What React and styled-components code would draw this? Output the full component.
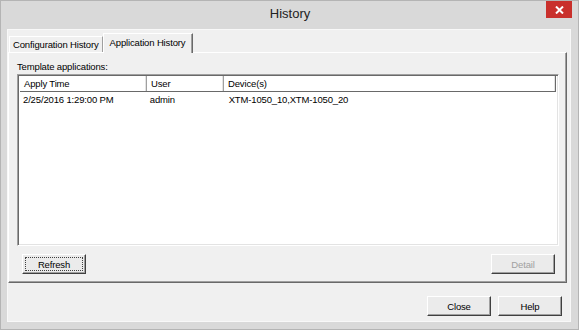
import React from "react";
import styled, {createGlobalStyle} from "styled-components";

const GlobalStyle = createGlobalStyle`
  html, body {
    margin: 0;
    padding: 0;
    background: #d9d9d9;
  }
  body {
    font-family: "Liberation Sans", Arial, sans-serif;
  }
`;

const COLUMNS = [
    {key: "time", label: "Apply Time", width: 127},
    {key: "user", label: "User", width: 77},
    {key: "devices", label: "Device(s)", width: 334},
];

const ROWS = [
    {time: "2/25/2016 1:29:00 PM", user: "admin", devices: "XTM-1050_10,XTM-1050_20"},
];

const App = () => {
    return (
        <>
            <GlobalStyle/>
            <Window>
                <TitleBar>
                    <span/>
                    <Title>History</Title>
                    <CloseBox>
                        <svg width="9" height="8" viewBox="0 0 9 8">
                            <path d="M1 0.5 L8 7.5 M8 0.5 L1 7.5" stroke="#fff" strokeWidth="2"/>
                        </svg>
                    </CloseBox>
                </TitleBar>
                <Client>
                    <TabStrip>
                        <Tab>Configuration History</Tab>
                        <Tab active>Application History</Tab>
                    </TabStrip>
                    <Panel>
                        <Label>Template applications:</Label>
                        <ListBox>
                            <HeaderRow>
                                {COLUMNS.map((col) => (
                                    <HeaderCell key={col.key} style={{width: col.width}}>{col.label}</HeaderCell>
                                ))}
                            </HeaderRow>
                            {ROWS.map((row, index) => (
                                <Row key={'row-' + index}>
                                    {COLUMNS.map((col) => (
                                        <Cell key={col.key} style={{width: col.width}}>{row[col.key]}</Cell>
                                    ))}
                                </Row>
                            ))}
                        </ListBox>
                        <PanelButtons>
                            <Button focused>Refresh</Button>
                            <Button disabled>Detail</Button>
                        </PanelButtons>
                    </Panel>
                    <Footer>
                        <Button>Close</Button>
                        <Button>Help</Button>
                    </Footer>
                </Client>
            </Window>
        </>
    );
};

const Window = styled.div`
  width: 579px;
  height: 330px;
  box-sizing: border-box;
  background: #d9d9d9;
  border: 1px solid #b4b4b4;
  padding: 0 7px 7px 6px;
  display: flex;
  flex-direction: column;
  font-size: 9.5px;
  letter-spacing: -0.15px;
  color: #000;
`;

const TitleBar = styled.div`
  height: 28px;
  display: grid;
  grid-template-columns: 1fr auto 1fr;
  align-items: start;
`;

const Title = styled.div`
  font-size: 13px;
  letter-spacing: 0;
  color: #222;
  line-height: 26px;
  padding-left: 2px;
`;

const CloseBox = styled.div`
  justify-self: end;
  margin-right: -1px;
  width: 26px;
  height: 17px;
  background: #c9302c;
  display: flex;
  align-items: center;
  justify-content: center;
`;

const Client = styled.div`
  flex: 1;
  background: #f0f0f0;
  border: 1px solid #f8f8f8;
  display: flex;
  flex-direction: column;
  padding: 3px 3px 0 0;
`;

const TabStrip = styled.div`
  display: flex;
  align-items: flex-end;
  padding-left: 1px;
  height: 19px;
  position: relative;
  z-index: 1;
`;

const Tab = styled.div`
  box-sizing: border-box;
  height: ${(p) => (p.active ? "20px" : "16px")};
  margin-bottom: ${(p) => (p.active ? "-1px" : "0")};
  padding: ${(p) => (p.active ? "2px 7px 0 6px" : "1px 3px 0 3px")};
  background: #f0f0f0;
  border-top: 1px solid #fff;
  border-left: 1px solid #fff;
  border-right: 1px solid ${(p) => (p.active ? "#696969" : "#a0a0a0")};
  box-shadow: ${(p) => (p.active ? "inset -1px 0 #a0a0a0" : "none")};
  line-height: 13px;
  white-space: nowrap;
`;

const Panel = styled.div`
  height: 231px;
  box-sizing: border-box;
  border: 1px solid;
  border-color: #fff #696969 #696969 #fff;
  box-shadow: inset -1px -1px #a0a0a0;
  padding: 8px 7px 8px 8px;
  display: flex;
  flex-direction: column;
`;

const Label = styled.div`
  line-height: 12px;
  height: 12px;
  margin-bottom: 1px;
`;

const ListBox = styled.div`
  height: 172px;
  box-sizing: border-box;
  background: #fff;
  border: 1px solid;
  border-color: #a0a0a0 #fff #fff #a0a0a0;
  box-shadow: inset 1px 1px #696969, inset -1px -1px #e3e3e3;
  padding: 1px 1px 1px 2px;
`;

const HeaderRow = styled.div`
  display: flex;
  height: 15px;
  border-bottom: 1px solid #696969;
  border-right: 1px solid #696969;
  margin-right: 1px;
`;

const HeaderCell = styled.div`
  box-sizing: border-box;
  padding-left: 4px;
  line-height: 15px;
  border-right: 1px solid #a0a0a0;
  box-shadow: inset -1px 0 #e3e3e3;
  &:last-child {
    border-right: none;
    flex: 1;
  }
`;

const Row = styled.div`
  display: flex;
  height: 16px;
`;

const Cell = styled.div`
  box-sizing: border-box;
  padding-left: 3px;
  line-height: 15px;
  white-space: nowrap;
  &:last-child {
    padding-left: 5px;
  }
`;

const PanelButtons = styled.div`
  display: flex;
  justify-content: space-between;
  padding: 0 4px 0 5px;
  margin-top: 8px;
`;

const Button = styled.button`
  width: 64px;
  height: 20px;
  box-sizing: border-box;
  font: inherit;
  letter-spacing: inherit;
  color: ${(p) => (p.disabled ? "#a0a0a0" : "#000")};
  background: #ebebeb;
  border: 1px solid;
  border-color: #fff #404040 #404040 #fff;
  box-shadow: inset -1px -1px #a0a0a0;
  padding: 0;
  outline: ${(p) => (p.focused ? "1px dotted #404040" : "none")};
  outline-offset: -4px;
  line-height: 17px;
`;

const Footer = styled.div`
  flex: 1;
  display: flex;
  justify-content: flex-end;
  align-items: flex-start;
  gap: 7px;
  padding: 13px 5px 0 0;
`;

export default App;
